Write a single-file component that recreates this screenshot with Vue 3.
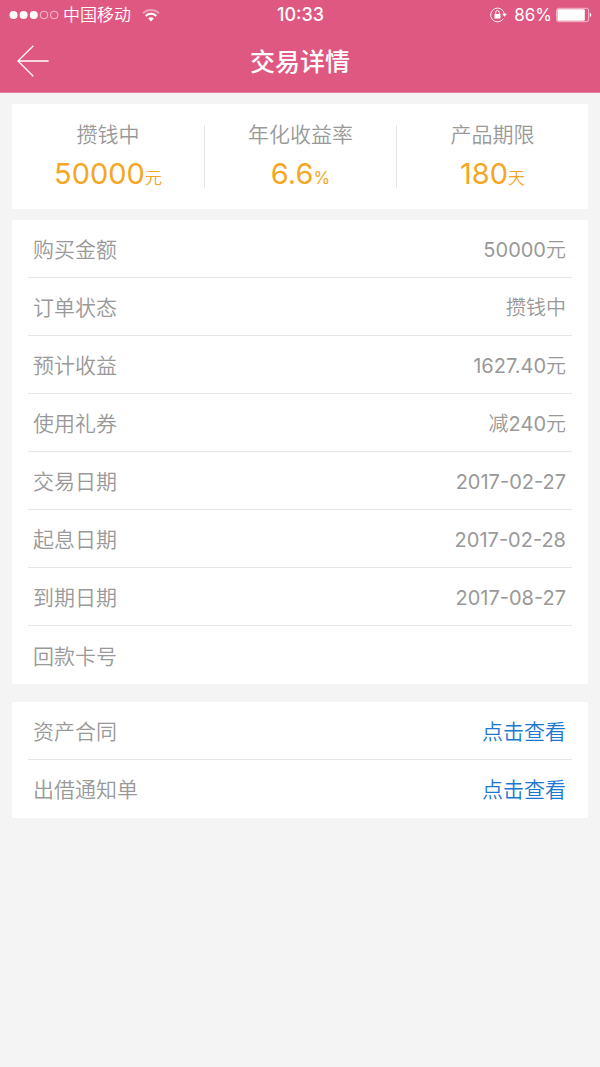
<script setup>
const summary = [
  { label: '攒钱中', value: '50000', unit: '元' },
  { label: '年化收益率', value: '6.6', unit: '%' },
  { label: '产品期限', value: '180', unit: '天' },
]

const details = [
  { label: '购买金额', value: '50000元' },
  { label: '订单状态', value: '攒钱中' },
  { label: '预计收益', value: '1627.40元' },
  { label: '使用礼券', value: '减240元' },
  { label: '交易日期', value: '2017-02-27' },
  { label: '起息日期', value: '2017-02-28' },
  { label: '到期日期', value: '2017-08-27' },
  { label: '回款卡号', value: '' },
]

const documents = ['资产合同', '出借通知单']
</script>

<template>
  <div class="page">
    <header class="header">
      <div class="status">
        <div class="status-side">
          <svg class="signal" width="50" height="10" viewBox="0 0 50 10" aria-hidden="true">
            <g fill="#fff">
              <circle cx="4.5" cy="5" r="4" />
              <circle cx="14.6" cy="5" r="4" />
              <circle cx="24.8" cy="5" r="4" />
            </g>
            <g fill="none" stroke="#fff" stroke-opacity=".75" stroke-width=".8">
              <circle cx="35" cy="5" r="3.8" />
              <circle cx="45.2" cy="5" r="3.8" />
            </g>
          </svg>
          <span class="carrier">中国移动</span>
          <svg class="wifi" width="18" height="14" viewBox="0 0 18 14" aria-hidden="true">
            <g fill="none" stroke="#fff" stroke-width="2">
              <path d="M1 5.2A11.6 11.6 0 0 1 17 5.2" stroke-opacity=".42" />
              <path d="M3.7 8A7.6 7.6 0 0 1 14.3 8" />
            </g>
            <path d="M6.1 10.6A4.2 4.2 0 0 1 11.9 10.6L9 13.4Z" fill="#fff" />
          </svg>
        </div>
        <time class="clock">10:33</time>
        <div class="status-side status-right">
          <svg class="lock" width="17" height="16" viewBox="0 0 17 16" aria-hidden="true">
            <path d="M13.3 11.8A6.9 6.9 0 1 1 14.4 7.2" fill="none" stroke="#fff" stroke-opacity=".9" stroke-width="1" />
            <path d="M12 6.8H17L14.5 9.8Z" fill="#fff" />
            <path d="M5.7 7.5V5.4a1.8 1.8 0 0 1 3.6 0V7.5" fill="none" stroke="#fff" stroke-width="1" />
            <rect x="4.5" y="7" width="6" height="4.6" rx=".6" fill="#fff" />
          </svg>
          <span class="percent">86%</span>
          <svg class="battery" width="36" height="16" viewBox="0 0 36 16" aria-hidden="true">
            <rect x=".6" y="1.3" width="32" height="13.4" rx="2" fill="none" stroke="#fff" stroke-opacity=".65" stroke-width=".9" />
            <rect x="1.4" y="2.2" width="27.4" height="11.6" rx="1" fill="#fff" />
            <path d="M33.8 5.8a2.4 2.4 0 0 1 0 4.4Z" fill="#fff" />
          </svg>
        </div>
      </div>
      <div class="nav">
        <button class="back" type="button" aria-label="返回">
          <svg width="34" height="34" viewBox="0 0 34 34" aria-hidden="true">
            <path d="M17.3 1.7L2 17L17.3 32.3M2 17H32.7" fill="none" stroke="#fff" stroke-width="1.3" />
          </svg>
        </button>
        <h1 class="title">交易详情</h1>
      </div>
    </header>

    <main class="content">
      <section class="card summary">
        <div v-for="item in summary" :key="item.label" class="stat">
          <span class="stat-label">{{ item.label }}</span>
          <span class="stat-value">{{ item.value }}<small class="unit">{{ item.unit }}</small></span>
        </div>
      </section>

      <dl class="card list">
        <div v-for="row in details" :key="row.label" class="row">
          <dt>{{ row.label }}</dt>
          <dd>{{ row.value }}</dd>
        </div>
      </dl>

      <ul class="card list documents">
        <li v-for="(name, i) in documents" :key="name" class="row">
          <span :id="'document-' + i">{{ name }}</span>
          <a class="link" href="#" :aria-describedby="'document-' + i">点击查看</a>
        </li>
      </ul>
    </main>
  </div>
</template>

<style>
body {
  background: #f4f4f4;
}
</style>

<style scoped>
.page {
  color: #999;
  font-family: Inter, "Noto Sans CJK SC DemiLight", "Noto Sans CJK SC", sans-serif;
  font-size: 21px;
  font-weight: 350;
}

.header {
  box-sizing: border-box;
  color: #fff;
  background: #df5881;
  border-bottom: 1px solid #e0809e;
}

.status {
  display: grid;
  grid-template-columns: 1fr auto 1fr;
  align-items: center;
  height: 30px;
  padding: 0 8px 0 9px;
  font-size: 17px;
  line-height: 30px;
}

.status-side {
  display: flex;
  align-items: center;
}

.status-right {
  justify-content: flex-end;
}

.carrier {
  margin: 0 11px 0 4px;
}

.clock {
  font-size: 18px;
  font-weight: 500;
}

.percent {
  margin: 0 4px 0 7px;
  font-weight: 400;
}

.nav {
  display: grid;
  grid-template-columns: 1fr auto 1fr;
  align-items: center;
  height: 62px;
}

.back {
  justify-self: start;
  display: flex;
  margin-left: 16px;
  padding: 0;
  border: 0;
  background: none;
  cursor: pointer;
}

.title {
  margin: 0;
  padding-top: 2px;
  font-family: Inter, "Noto Sans CJK SC", sans-serif;
  font-size: 25px;
  font-weight: 500;
  line-height: 36px;
}

.content {
  padding: 11px 12px;
}

.card {
  margin: 0;
  background: #fff;
}

.summary {
  display: grid;
  grid-template-columns: repeat(3, 1fr);
  padding: 21px 0;
}

.stat {
  display: flex;
  flex-direction: column;
  align-items: center;
  height: 63px;
}

.stat + .stat {
  border-left: 1px solid #e6e6e6;
}

.stat-label {
  line-height: 20px;
}

.stat-value {
  margin-top: 9px;
  color: #f5a623;
  font-size: 29px;
  font-weight: 400;
  line-height: 40px;
}

.unit {
  font-size: 17px;
  line-height: 20px;
}

.list {
  margin-top: 11px;
  padding: 0 16px;
  list-style: none;
}

.documents {
  margin-top: 18px;
}

.row {
  box-sizing: border-box;
  display: flex;
  justify-content: space-between;
  align-items: center;
  height: 58px;
  padding: 3px 6px 0 5px;
  border-bottom: 1px solid #e6e6e6;
  line-height: 28px;
}

.documents .row {
  padding-top: 2px;
}

.row:last-child {
  border-bottom: 0;
}

dd {
  margin: 0;
  font-size: 20px;
  font-weight: 400;
}

.link {
  color: #1b78d0;
  text-decoration: none;
}
</style>
